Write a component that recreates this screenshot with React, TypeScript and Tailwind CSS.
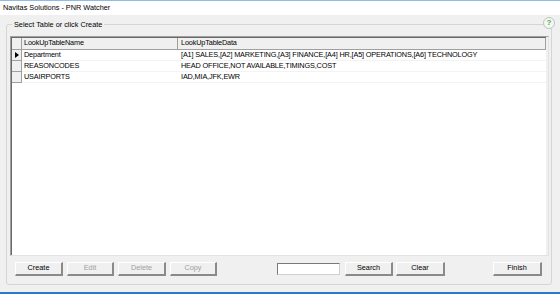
import React from "react";

const font = { fontFamily: '"Liberation Sans", Arial, sans-serif' };

function Btn({ label, disabled, w }: { label: string; disabled?: boolean; w: string }) {
  return (
    <div
      className={`${w} h-[14px] flex items-center justify-center bg-[#f0f0f0] border-t border-l border-t-white border-l-white border-r-2 border-b-2 border-r-[#8a8a8a] border-b-[#8a8a8a] text-[7.3px] ${
        disabled ? "text-[#a0a0a0]" : "text-black"
      }`}
    >
      {label}
    </div>
  );
}

const rows = [
  ["Department", "[A1] SALES,[A2] MARKETING,[A3] FINANCE,[A4] HR,[A5] OPERATIONS,[A6] TECHNOLOGY"],
  ["REASONCODES", "HEAD OFFICE,NOT AVAILABLE,TIMINGS,COST"],
  ["USAIRPORTS", "IAD,MIA,JFK,EWR"],
];

export default function App() {
  return (
    <div className="w-[560px] h-[294px] bg-[#f0f0f0] flex flex-col overflow-hidden" style={font}>
      <div className="h-px bg-[#8fbbe8]" />
      <div className="h-[14px] bg-white flex items-center pl-[3px] text-[7.3px] text-black">
        Navitas Solutions - PNR Watcher
      </div>
      <div className="flex-1 relative px-[6px] pt-[9px]">
        {/* group box */}
        <div className="relative h-[261px] w-[546px] border border-[#d5d5d5] rounded-[3px] flex flex-col">
          <div className="absolute -top-[5px] left-[5px] bg-[#f0f0f0] px-[2px] text-[7.3px] leading-[9px] text-black">
            Select Table or click Create
          </div>
          <div className="absolute -top-[8px] right-[-4px] w-[12px] h-[12px] rounded-full border border-[#b9c7b9] bg-[#f4f7f4] flex items-center justify-center text-[8px] font-bold text-[#4caa3c] leading-none">
            ?
          </div>
          {/* grid */}
          <div className="mt-[11px] ml-[3px] w-[539px] h-[220px] bg-white border-t border-l border-t-[#a0a0a0] border-l-[#a0a0a0] border-r border-b border-r-[#e3e3e3] border-b-[#e3e3e3] flex">
            <div className="flex-1 flex flex-col border-t border-l border-[#696969]">
              <div className="flex h-[12px] bg-[#f0f0f0] border-b border-[#a0a0a0] text-[7.3px] text-black">
                <div className="w-[10px] border-r border-[#a0a0a0]" />
                <div className="w-[156px] border-r border-[#a0a0a0] flex items-center pl-[2px] tracking-[-0.15px]">LookUpTableName</div>
                <div className="flex-1 flex items-center pl-[3px] border-r border-[#a0a0a0] tracking-[-0.15px]">LookUpTableData</div>
              </div>
              {rows.map((r, i) => (
                <div key={r[0]} className="flex h-[11px] text-[7.3px] text-black tracking-[-0.15px]">
                  <div className="w-[10px] bg-[#f0f0f0] border-r border-b border-[#a0a0a0] flex items-center justify-center">
                    {i === 0 && (
                      <svg width="4" height="6" viewBox="0 0 4 6">
                        <path d="M0 0 L4 3 L0 6 Z" fill="#000" />
                      </svg>
                    )}
                  </div>
                  <div className="w-[156px] flex items-center pl-[2px] border-b border-[#f3f3f3]">{r[0]}</div>
                  <div className="flex-1 flex items-center pl-[3px] border-b border-[#f3f3f3] whitespace-nowrap">{r[1]}</div>
                </div>
              ))}
            </div>
            <div className="w-[2px] bg-[#f0f0f0]" />
          </div>
          {/* buttons */}
          <div className="flex items-center mt-[5px] ml-[8px] h-[15px]">
            <Btn label="Create" w="w-[48px]" />
            <div className="w-[4px]" />
            <Btn label="Edit" w="w-[47px]" disabled />
            <div className="w-[4px]" />
            <Btn label="Delete" w="w-[48px]" disabled />
            <div className="w-[4px]" />
            <Btn label="Copy" w="w-[47px]" disabled />
            <div className="w-[60px]" />
            <div className="w-[63px] h-[12px] bg-white border border-[#7a7a7a] border-r-[#d0d0d0] border-b-[#d0d0d0]" />
            <div className="w-[5px]" />
            <Btn label="Search" w="w-[48px]" />
            <div className="w-[3px]" />
            <Btn label="Clear" w="w-[49px]" />
            <div className="w-[48px]" />
            <Btn label="Finish" w="w-[49px]" />
          </div>
        </div>
      </div>
      <div className="h-[2px] bg-[#2b79c8]" />
    </div>
  );
}
